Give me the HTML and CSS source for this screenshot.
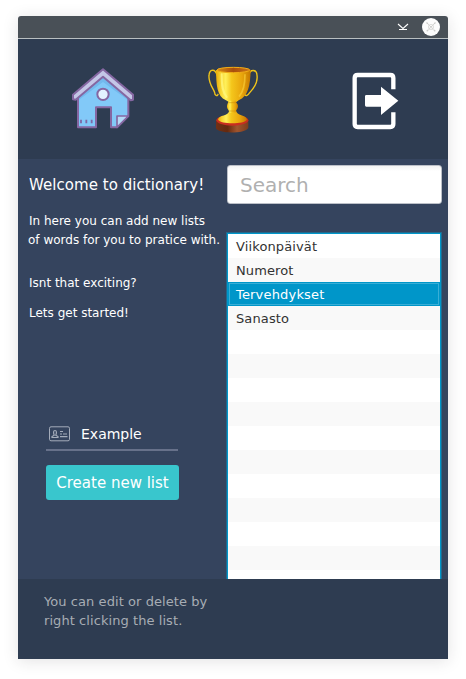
FILE: index.html
```html
<!DOCTYPE html>
<html lang="en">
<head>
<meta charset="utf-8">
<title>Dictionary</title>
<link rel="stylesheet" href="styles.css">
</head>
<body>
<div class="window">
  <div class="titlebar">
    <svg class="minimize" width="12" height="8" viewBox="0 0 12 8"><path d="M1 1 L6 5.5 L11 1 M2 6.5 H10" fill="none" stroke="#fff" stroke-width="1.1"/></svg>
    <svg class="close" width="18" height="18" viewBox="0 0 18 18"><circle cx="9" cy="9" r="9" fill="#fcfcfc"/><path d="M4.5 4.5 L13.5 13.5 M13.5 4.5 L4.5 13.5" stroke="#cbcbc9" stroke-width="1.3" stroke-dasharray="2 .6"/><path d="M9 6 L12 9 L9 12 L6 9Z" fill="none" stroke="#d8d8d6" stroke-width=".8"/></svg>
  </div>
  <nav class="header">
    <svg class="home" width="80" height="76" viewBox="0 0 240 228">
      <path d="M48 98 L123 42 L199 98 V168 L164 202 H147 V142 H102 V202 H48Z" fill="#82c9f8"/>
      <path d="M51 107 L123 49 L196 107 V119 L123 66 L51 119Z" fill="#73b9ed"/>
      <path d="M48 113 V202 H102 V142 H147 V202 H165 L199 168 V113" fill="none" stroke="#8567a2" stroke-width="6" stroke-linejoin="round"/>
      <path d="M165 202 V168 H199Z" fill="#b4d9f7" stroke="#8567a2" stroke-width="5" stroke-linejoin="round"/>
      <path d="M123 28 L33 104 V118 L41 119 L123 50 L206 121 L213 119 V104Z" fill="#c4c6e7" stroke="#8567a2" stroke-width="6" stroke-linejoin="round"/>
      <circle cx="123" cy="103" r="17" fill="#e2f3ff" stroke="#8567a2" stroke-width="6"/>
      <path d="M57 179 V190 M73 179 V190 M89 179 V190" stroke="#7e68a5" stroke-width="5.5"/>
    </svg>
    <svg class="trophy" width="70" height="76" viewBox="0 0 210 228">
      <defs>
        <linearGradient id="cup"><stop offset="0" stop-color="#e8ac08"/><stop offset=".14" stop-color="#f8d534"/><stop offset=".28" stop-color="#fff05a"/><stop offset=".45" stop-color="#f4c61b"/><stop offset=".75" stop-color="#e8a50c"/><stop offset="1" stop-color="#c47800"/></linearGradient>
        <linearGradient id="rim"><stop offset="0" stop-color="#d88c16"/><stop offset=".5" stop-color="#a84e0c"/><stop offset="1" stop-color="#ca7417"/></linearGradient>
        <linearGradient id="wood"><stop offset="0" stop-color="#713016"/><stop offset=".35" stop-color="#64290f"/><stop offset=".65" stop-color="#a0552e"/><stop offset="1" stop-color="#7d3c1c"/></linearGradient>
      </defs>
      <path d="M54 182 V205 C60 222 142 222 151 203 V180Z" fill="url(#wood)"/>
      <ellipse cx="103" cy="181" rx="48" ry="16" fill="#c92d20"/>
      <path d="M60 179 C62 164 92 170 94 151 H114 C115 168 145 164 147 179 C139 193 68 193 60 179Z" fill="url(#cup)"/>
      <path d="M58 47 C51 24 34 27 33 47 C31 71 48 88 50 98 C50 105 58 111 60 103 M152 46 C157 25 176 28 177 46 C181 72 161 91 155 98 C151 105 143 111 140 102" fill="none" stroke="#edc21a" stroke-width="4.2" stroke-linecap="round"/>
      <path d="M54 30 C55 76 56 108 84 121 L94 127 H114 L122 121 C151 108 157 76 158 29Z" fill="url(#cup)"/>
      <path d="M71 43 C71 80 74 98 86 111" fill="none" stroke="#fff780" stroke-width="6" stroke-linecap="round" opacity=".75"/>
      <path d="M141 43 C141 77 136 96 123 110" fill="none" stroke="#ffd842" stroke-width="5" opacity=".55"/>
      <ellipse cx="106" cy="30" rx="49" ry="8" fill="url(#rim)" stroke="#f1ad16" stroke-width="3"/>
      <path d="M92 122 C91 128 86 133 87 141 C89 150 93 149 94 158 H113 C113 149 120 148 120 138 C120 131 114 129 113 122Z" fill="url(#cup)"/>
      <path d="M92 128 H114 M92 153 H114" stroke="#c88708" stroke-width="1.5"/>
    </svg>
    <svg class="exit" width="70" height="76" viewBox="0 0 210 228">
      <path d="M160 88 V54 Q160 45 151 45 H53 Q44 45 44 54 V192 Q44 201 53 201 H151 Q160 201 160 192 V157" fill="none" stroke="#fff" stroke-width="13"/>
      <path d="M75 109 Q75 105 79 105 H123 V80 L175 122 L123 165 V140 H79 Q75 140 75 136Z" fill="#fff"/>
    </svg>
  </nav>
  <main class="content">
    <section class="intro">
      <h1>Welcome to dictionary!</h1>
      <p class="lead">In here you can add new lists</p>
      <p class="lead second">of words for you to pratice with.</p>
      <p class="exciting">Isnt that exciting?</p>
      <p class="started">Lets get started!</p>
      <div class="name-field">
        <svg width="22" height="16" viewBox="0 0 22 16"><g fill="none" stroke="#a4acba"><rect x=".5" y=".8" width="20" height="14" rx="1.5"/><path d="M3 11.5 V10.5 L5.2 9.2 C4.3 7 4.2 4.5 6 4.5 C7.8 4.5 7.7 7 6.8 9.2 L9 10.5 V11.5Z M11 5.5 H14 M11 8 H13 M14 8 H18 M11 10.7 H18.5" stroke-width="1.2"/></g></svg>
        <span>Example</span>
      </div>
      <button class="create">Create new list</button>
    </section>
    <section class="lists">
      <input class="search" placeholder="Search">
      <ul class="list">
        <li>Viikonpäivät</li>
        <li>Numerot</li>
        <li class="selected">Tervehdykset</li>
        <li>Sanasto</li>
        <li></li><li></li><li></li><li></li><li></li><li></li><li></li><li></li><li></li><li></li><li></li>
      </ul>
    </section>
  </main>
  <footer class="footer">You can edit or delete by<br>right clicking the list.</footer>
</div>
</body>
</html>
```
FILE: styles.css
```css
* { box-sizing: border-box; }
body {
  margin: 0;
  padding: 16px 18px 20px;
  height: 679px;
  overflow: hidden;
  background: #fff;
  font-family: "DejaVu Sans", sans-serif;
  color: #fff;
}
.window {
  width: 430px;
  height: 643px;
  border-radius: 3px 3px 0 0;
  overflow: hidden;
  box-shadow: 0 2px 16px rgba(40, 30, 40, .13);
}
.titlebar {
  height: 23px;
  display: flex;
  justify-content: flex-end;
  align-items: center;
  gap: 13px;
  padding-right: 8px;
  background: #495057;
  border-bottom: 1px solid #b9bfc1;
}
.titlebar svg { flex: none; }
.header {
  height: 120px;
  display: flex;
  padding: 21px 0 0 44px;
  background: #2e3c51;
}
.trophy { margin-left: 56px; }
.exit { margin-left: 72px; }
.content {
  height: 420px;
  display: grid;
  grid-template-columns: 209px 215px;
  background: #35445e;
  overflow: hidden;
}
.intro { padding-left: 11px; white-space: nowrap; }
h1, p { margin: 0; font-weight: 400; }
h1 { padding-top: 16px; font-size: 15px; line-height: 20px; letter-spacing: .05px; }
p { font-size: 12px; line-height: 18px; }
.lead { margin-top: 17px; }
.lead.second { margin: 1px 0 0 -1px; }
.exciting { margin-top: 25px; }
.started { margin-top: 12px; }
.name-field {
  width: 132px;
  height: 31px;
  margin: 98px 0 0 17px;
  padding: 0 0 1px 3px;
  display: flex;
  align-items: center;
  gap: 10px;
  border-bottom: 2px solid #67718a;
  font-size: 14px;
}
.create {
  display: block;
  width: 133px;
  height: 35px;
  margin: 14px 0 0 17px;
  padding: 0;
  border: 0;
  border-radius: 3px;
  background: #39c6cd;
  color: #fff;
  font: 15px "DejaVu Sans", sans-serif;
}
.search {
  display: block;
  width: 215px;
  height: 39px;
  margin-top: 6px;
  padding: 0 12px;
  border: 1px solid #bcc0c8;
  border-radius: 3px;
  background: linear-gradient(#f3f3f3, #fff 5px);
  font: 20px "DejaVu Sans", sans-serif;
}
.search::placeholder { color: #b0b0b0; opacity: 1; }
.list {
  width: 214px;
  margin: 29px 0 0;
  padding: 0;
  border: 1px solid #0096c9;
  box-shadow: 0 0 0 1px #22688c;
  list-style: none;
  font-size: 13px;
  letter-spacing: .12px;
  color: #323232;
}
.list li { height: 24px; padding: 1px 0 0 8px; line-height: 24px; background: #fff; }
.list li:nth-child(even) { background: #f9f9f9; }
.list .selected {
  background: #0096c9;
  color: #fff;
  letter-spacing: .18px;
  outline: 1px solid #39aed6;
  outline-offset: -2px;
}
.footer {
  height: 80px;
  padding: 13px 0 0 26px;
  background: #2e3c51;
  color: #a7adb4;
  font-size: 13px;
  line-height: 19px;
  letter-spacing: .07px;
}
```
